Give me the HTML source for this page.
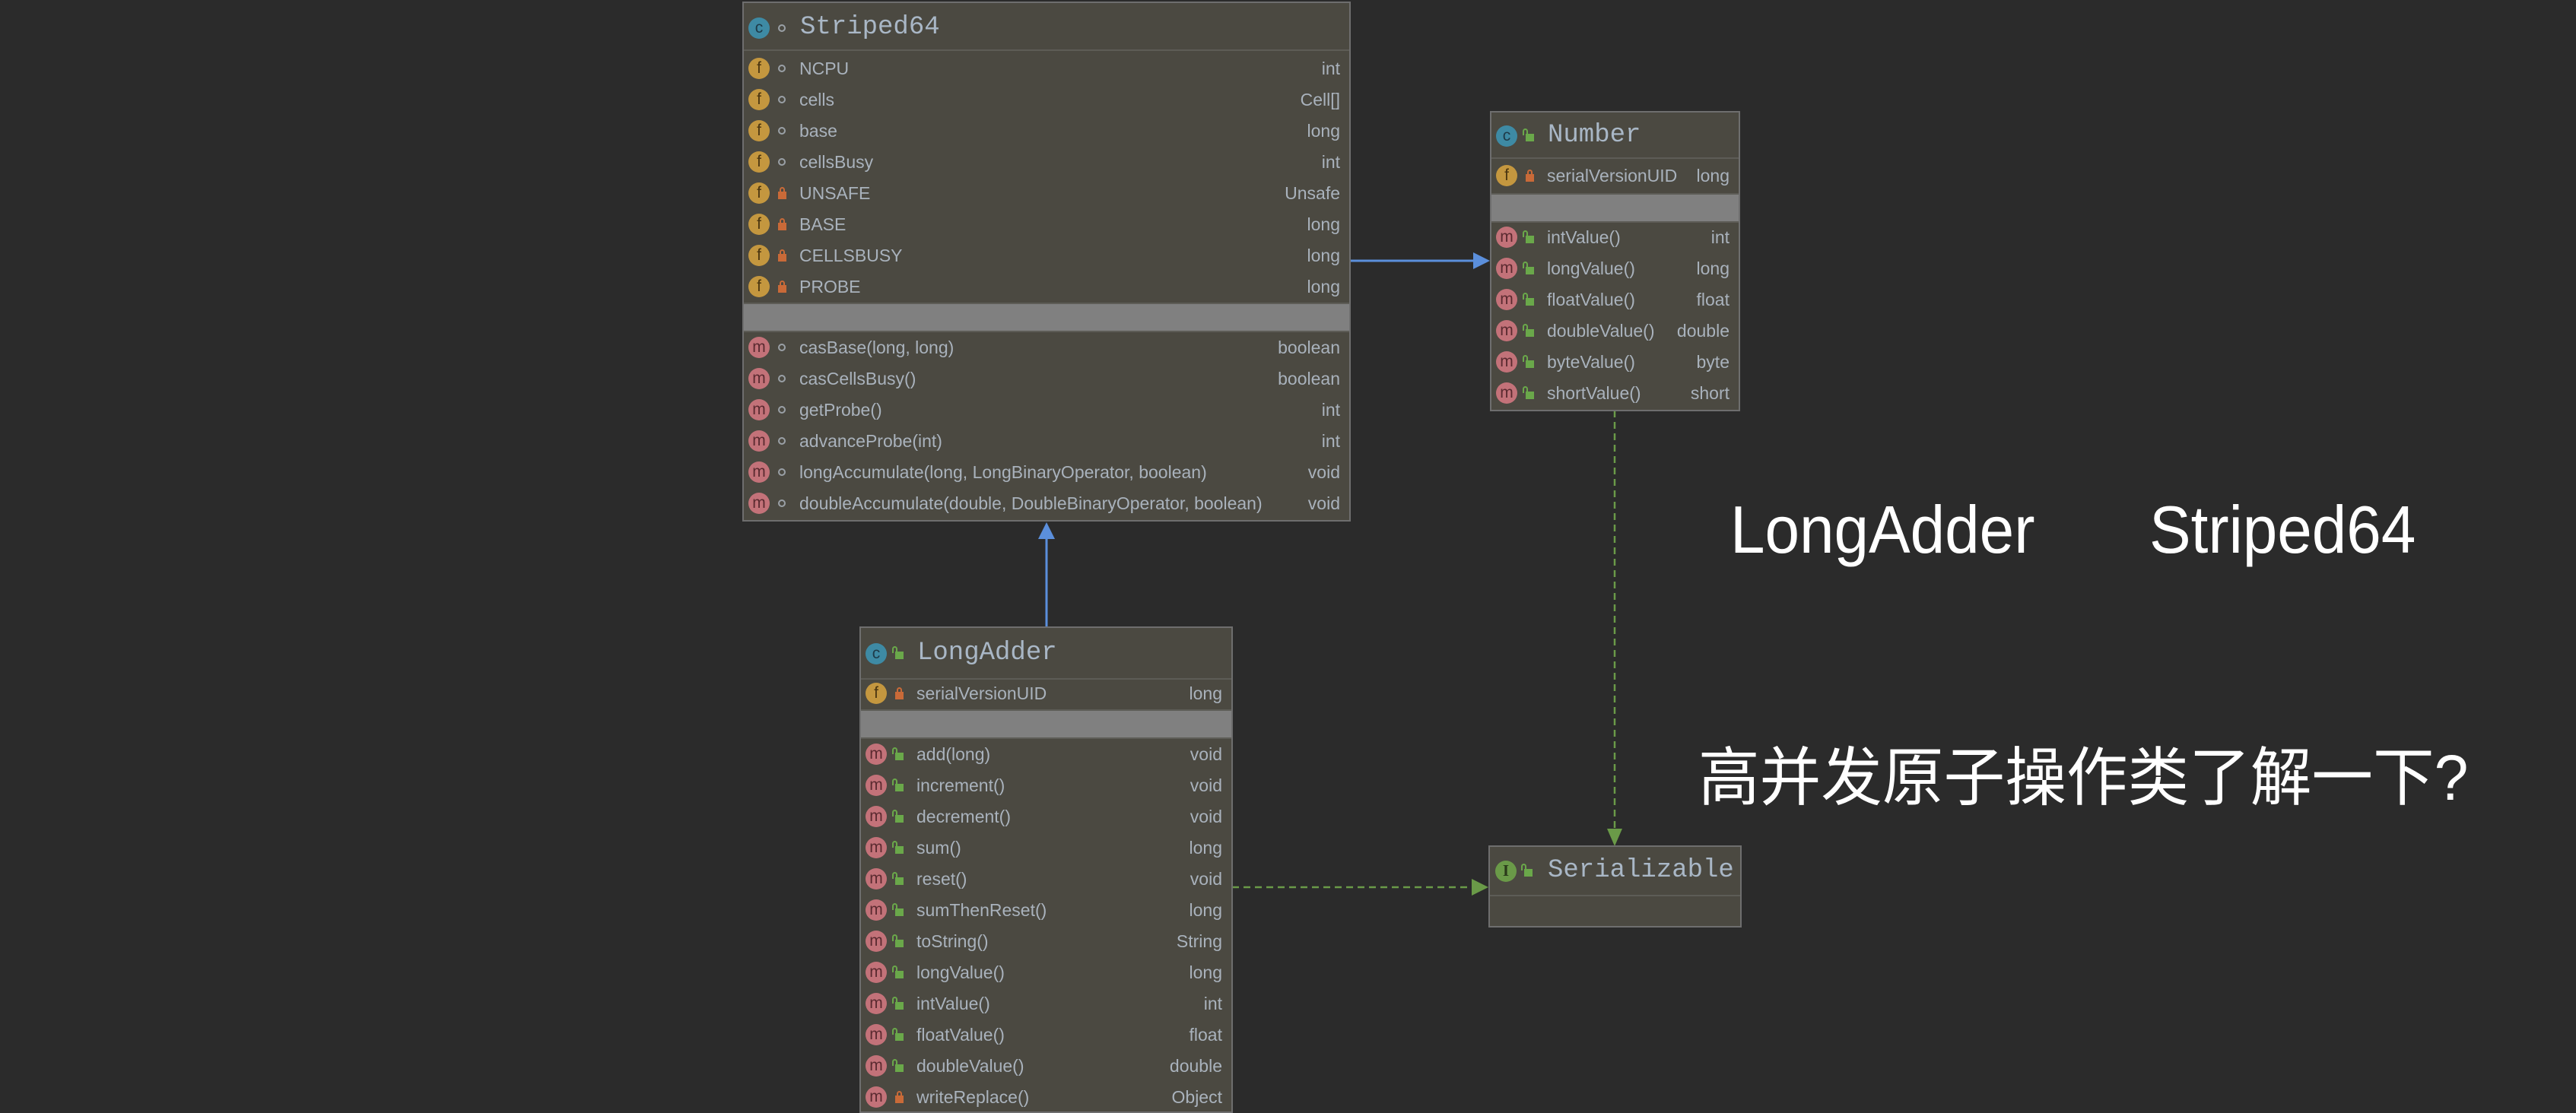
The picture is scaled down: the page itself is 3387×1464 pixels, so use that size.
<!DOCTYPE html>
<html><head><meta charset="utf-8"><style>
*{margin:0;padding:0;box-sizing:border-box}
body{width:3387px;height:1441px;background:#2b2b2b;position:relative;overflow:hidden;font-family:"Liberation Sans",sans-serif}
.box{position:absolute;background:#4b4941;border:2px solid #6e6e6e}
.hd{position:absolute;left:0;right:0;top:0;border-bottom:2px solid #5d5c56}
.tt{position:absolute;font-family:"Liberation Mono",monospace;font-size:34px;color:#a9b7c6}
.sep{position:absolute;left:0;right:0;background:#808080;border-top:2px solid #5d5c56;border-bottom:2px solid #5d5c56}
.r{position:absolute;left:0;right:0;height:41px;line-height:41px;font-size:23px;color:#a9b2bc}
.r .n{position:absolute;left:73px}
.r .t{position:absolute;right:12px}
.ic{position:absolute;width:28px;height:28px;border-radius:50%;text-align:center;font-size:21px;line-height:27px;font-family:"Liberation Sans",sans-serif}
.f{background:#c4973f;color:#4a3510}
.m{background:#c37279;color:#5a2a30}
.c{background:#3e8aa4;color:#1e3a48}
.i{background:#6a9a48;color:#2a3a1a;font-family:"Liberation Serif",serif;font-weight:bold}
.dot{position:absolute;width:10px;height:10px;border:2px solid #9aa0a6;border-radius:50%}
.pl{position:absolute;width:11px;height:10px;background:#c96a38}
.pl:before{content:"";position:absolute;left:2px;top:-6px;width:7px;height:8px;border:2px solid #c96a38;border-bottom:none;border-radius:4px 4px 0 0;box-sizing:border-box}
.pu{position:absolute;width:11px;height:10px;background:#6aa84a}
.pu:before{content:"";position:absolute;left:-4px;top:-7px;width:7px;height:9px;border:2px solid #6aa84a;border-bottom:none;border-radius:4px 4px 0 0;box-sizing:border-box}
.big{position:absolute;color:#fff;white-space:nowrap;transform-origin:0 0}
</style></head><body>

<svg width="3387" height="1441" style="position:absolute;left:0;top:0">
<line x1="1776" y1="343" x2="1940" y2="343" stroke="#5b8fdc" stroke-width="3"/>
<polygon points="1959,343 1937,332 1937,354" fill="#5b8fdc"/>
<line x1="1376" y1="824" x2="1376" y2="705" stroke="#5b8fdc" stroke-width="3"/>
<polygon points="1376,687 1365,709 1387,709" fill="#5b8fdc"/>
<line x1="2123" y1="540" x2="2123" y2="1092" stroke="#6a9a48" stroke-width="2.5" stroke-dasharray="9,6"/>
<polygon points="2123,1113 2113,1090 2133,1090" fill="#6a9a48"/>
<line x1="1620" y1="1167" x2="1936" y2="1167" stroke="#6a9a48" stroke-width="2.5" stroke-dasharray="9,6"/>
<polygon points="1957,1167 1935,1156 1935,1178" fill="#6a9a48"/>
</svg>

<!-- Striped64 -->
<div class="box" style="left:976px;top:2px;width:800px;height:684px">
<div class="hd" style="height:63px"></div>
<div class="ic c" style="left:6px;top:19px">c</div><div class="dot" style="left:45px;top:28px"></div>
<div class="tt" style="left:74px;top:13px">Striped64</div>
<div class="r" style="top:66px"><div class="ic f" style="left:6px;top:6px">f</div><div class="dot" style="left:45px;top:15px"></div><span class="n">NCPU</span><span class="t">int</span></div>
<div class="r" style="top:107px"><div class="ic f" style="left:6px;top:6px">f</div><div class="dot" style="left:45px;top:15px"></div><span class="n">cells</span><span class="t">Cell[]</span></div>
<div class="r" style="top:148px"><div class="ic f" style="left:6px;top:6px">f</div><div class="dot" style="left:45px;top:15px"></div><span class="n">base</span><span class="t">long</span></div>
<div class="r" style="top:189px"><div class="ic f" style="left:6px;top:6px">f</div><div class="dot" style="left:45px;top:15px"></div><span class="n">cellsBusy</span><span class="t">int</span></div>
<div class="r" style="top:230px"><div class="ic f" style="left:6px;top:6px">f</div><div class="pl" style="left:45px;top:18px"></div><span class="n">UNSAFE</span><span class="t">Unsafe</span></div>
<div class="r" style="top:271px"><div class="ic f" style="left:6px;top:6px">f</div><div class="pl" style="left:45px;top:18px"></div><span class="n">BASE</span><span class="t">long</span></div>
<div class="r" style="top:312px"><div class="ic f" style="left:6px;top:6px">f</div><div class="pl" style="left:45px;top:18px"></div><span class="n">CELLSBUSY</span><span class="t">long</span></div>
<div class="r" style="top:353px"><div class="ic f" style="left:6px;top:6px">f</div><div class="pl" style="left:45px;top:18px"></div><span class="n">PROBE</span><span class="t">long</span></div>
<div class="sep" style="top:394px;height:39px"></div>
<div class="r" style="top:433px"><div class="ic m" style="left:6px;top:6px">m</div><div class="dot" style="left:45px;top:15px"></div><span class="n">casBase(long, long)</span><span class="t">boolean</span></div>
<div class="r" style="top:474px"><div class="ic m" style="left:6px;top:6px">m</div><div class="dot" style="left:45px;top:15px"></div><span class="n">casCellsBusy()</span><span class="t">boolean</span></div>
<div class="r" style="top:515px"><div class="ic m" style="left:6px;top:6px">m</div><div class="dot" style="left:45px;top:15px"></div><span class="n">getProbe()</span><span class="t">int</span></div>
<div class="r" style="top:556px"><div class="ic m" style="left:6px;top:6px">m</div><div class="dot" style="left:45px;top:15px"></div><span class="n">advanceProbe(int)</span><span class="t">int</span></div>
<div class="r" style="top:597px"><div class="ic m" style="left:6px;top:6px">m</div><div class="dot" style="left:45px;top:15px"></div><span class="n">longAccumulate(long, LongBinaryOperator, boolean)</span><span class="t">void</span></div>
<div class="r" style="top:638px"><div class="ic m" style="left:6px;top:6px">m</div><div class="dot" style="left:45px;top:15px"></div><span class="n">doubleAccumulate(double, DoubleBinaryOperator, boolean)</span><span class="t">void</span></div>
</div>

<!-- Number -->
<div class="box" style="left:1959px;top:146px;width:329px;height:395px">
<div class="hd" style="height:61px"></div>
<div class="ic c" style="left:6px;top:17px">c</div><div class="pu" style="left:45px;top:28px"></div>
<div class="tt" style="left:74px;top:11px">Number</div>
<div class="r" style="top:63px"><div class="ic f" style="left:6px;top:6px">f</div><div class="pl" style="left:45px;top:18px"></div><span class="n">serialVersionUID</span><span class="t">long</span></div>
<div class="sep" style="top:106px;height:39px"></div>
<div class="r" style="top:144px"><div class="ic m" style="left:6px;top:6px">m</div><div class="pu" style="left:45px;top:18px"></div><span class="n">intValue()</span><span class="t">int</span></div>
<div class="r" style="top:185px"><div class="ic m" style="left:6px;top:6px">m</div><div class="pu" style="left:45px;top:18px"></div><span class="n">longValue()</span><span class="t">long</span></div>
<div class="r" style="top:226px"><div class="ic m" style="left:6px;top:6px">m</div><div class="pu" style="left:45px;top:18px"></div><span class="n">floatValue()</span><span class="t">float</span></div>
<div class="r" style="top:267px"><div class="ic m" style="left:6px;top:6px">m</div><div class="pu" style="left:45px;top:18px"></div><span class="n">doubleValue()</span><span class="t">double</span></div>
<div class="r" style="top:308px"><div class="ic m" style="left:6px;top:6px">m</div><div class="pu" style="left:45px;top:18px"></div><span class="n">byteValue()</span><span class="t">byte</span></div>
<div class="r" style="top:349px"><div class="ic m" style="left:6px;top:6px">m</div><div class="pu" style="left:45px;top:18px"></div><span class="n">shortValue()</span><span class="t">short</span></div>
</div>

<!-- LongAdder -->
<div class="box" style="left:1130px;top:824px;width:491px;height:640px">
<div class="hd" style="height:68px"></div>
<div class="ic c" style="left:6px;top:20px">c</div><div class="pu" style="left:45px;top:31px"></div>
<div class="tt" style="left:74px;top:14px">LongAdder</div>
<div class="r" style="top:66px"><div class="ic f" style="left:6px;top:6px">f</div><div class="pl" style="left:45px;top:18px"></div><span class="n">serialVersionUID</span><span class="t">long</span></div>
<div class="sep" style="top:107px;height:39px"></div>
<div class="r" style="top:146px"><div class="ic m" style="left:6px;top:6px">m</div><div class="pu" style="left:45px;top:18px"></div><span class="n">add(long)</span><span class="t">void</span></div>
<div class="r" style="top:187px"><div class="ic m" style="left:6px;top:6px">m</div><div class="pu" style="left:45px;top:18px"></div><span class="n">increment()</span><span class="t">void</span></div>
<div class="r" style="top:228px"><div class="ic m" style="left:6px;top:6px">m</div><div class="pu" style="left:45px;top:18px"></div><span class="n">decrement()</span><span class="t">void</span></div>
<div class="r" style="top:269px"><div class="ic m" style="left:6px;top:6px">m</div><div class="pu" style="left:45px;top:18px"></div><span class="n">sum()</span><span class="t">long</span></div>
<div class="r" style="top:310px"><div class="ic m" style="left:6px;top:6px">m</div><div class="pu" style="left:45px;top:18px"></div><span class="n">reset()</span><span class="t">void</span></div>
<div class="r" style="top:351px"><div class="ic m" style="left:6px;top:6px">m</div><div class="pu" style="left:45px;top:18px"></div><span class="n">sumThenReset()</span><span class="t">long</span></div>
<div class="r" style="top:392px"><div class="ic m" style="left:6px;top:6px">m</div><div class="pu" style="left:45px;top:18px"></div><span class="n">toString()</span><span class="t">String</span></div>
<div class="r" style="top:433px"><div class="ic m" style="left:6px;top:6px">m</div><div class="pu" style="left:45px;top:18px"></div><span class="n">longValue()</span><span class="t">long</span></div>
<div class="r" style="top:474px"><div class="ic m" style="left:6px;top:6px">m</div><div class="pu" style="left:45px;top:18px"></div><span class="n">intValue()</span><span class="t">int</span></div>
<div class="r" style="top:515px"><div class="ic m" style="left:6px;top:6px">m</div><div class="pu" style="left:45px;top:18px"></div><span class="n">floatValue()</span><span class="t">float</span></div>
<div class="r" style="top:556px"><div class="ic m" style="left:6px;top:6px">m</div><div class="pu" style="left:45px;top:18px"></div><span class="n">doubleValue()</span><span class="t">double</span></div>
<div class="r" style="top:597px"><div class="ic m" style="left:6px;top:6px">m</div><div class="pl" style="left:45px;top:18px"></div><span class="n">writeReplace()</span><span class="t">Object</span></div>
</div>

<!-- Serializable -->
<div class="box" style="left:1957px;top:1112px;width:333px;height:108px">
<div class="hd" style="height:65px"></div>
<div class="ic i" style="left:7px;top:18px">I</div><div class="pu" style="left:45px;top:29px"></div>
<div class="tt" style="left:76px;top:12px">Serializable</div>
</div>

<div class="big" style="left:2275px;top:646px;font-size:88px;transform:scaleX(0.93)">LongAdder</div>
<div class="big" style="left:2826px;top:646px;font-size:88px;transform:scaleX(0.93)">Striped64</div>
<div class="big" style="left:2233px;top:956px;font-size:84px;font-family:'Liberation Sans','Noto Sans CJK SC',sans-serif;transform:scaleX(0.96)">高并发原子操作类了解一下?</div>

</body></html>
